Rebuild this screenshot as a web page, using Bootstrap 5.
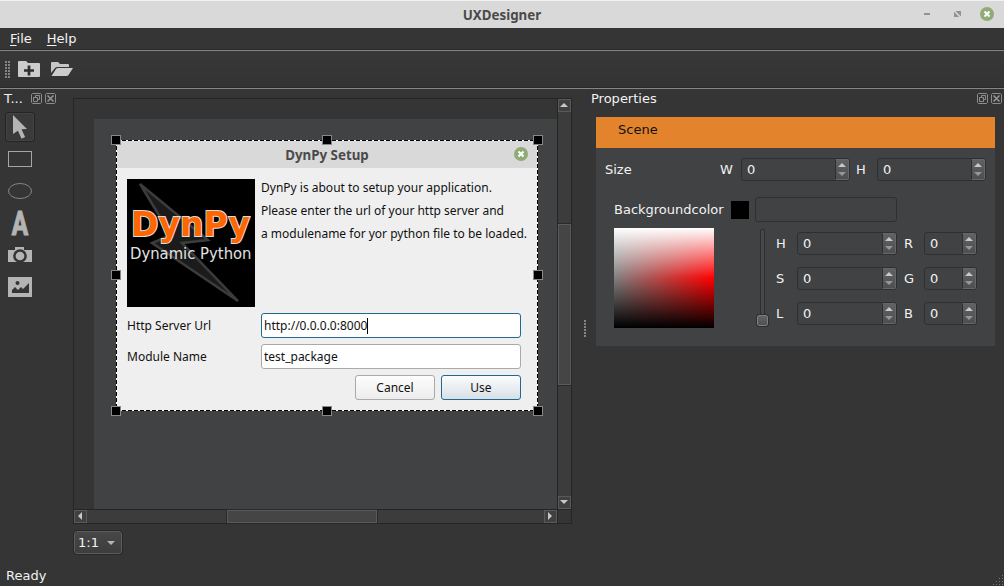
<!DOCTYPE html>
<html lang="en">
<head>
<meta charset="utf-8">
<title>UXDesigner</title>
<link rel="stylesheet" href="https://cdn.jsdelivr.net/npm/bootstrap@5.3.0/dist/css/bootstrap.min.css">
<style>
body{width:1004px;height:586px;overflow:hidden;background:#353535;color:#f2f2f2;font:13px/16px "DejaVu Sans",sans-serif}
svg{display:block;flex:none}
.winbar{height:28px;background:#d9d9d9;border-top:1px solid #f2f2f2;font:bold 13.33px/28px "Noto Sans",sans-serif;color:#4a4a4a}
.winbtns{right:9px;top:0}
.menus{height:23px;padding-left:10px;gap:15px;border-bottom:1px solid #858585;box-shadow:inset 0 -1px #2a2a2a;line-height:21px}
.menus u{text-underline-offset:2px}
.tools{height:38px;border-bottom:1px solid #858585;box-shadow:inset 0 -1px #2a2a2a;padding-left:5px;background:linear-gradient(#383838,#333)}
.tools svg{margin-bottom:1px}
.grip{width:5px;background:repeating-linear-gradient(#0000 0 2px,#353535 2px 3px),repeating-linear-gradient(90deg,#858585 0 2px,#353535 2px 3px)}
.leftdock{width:73px;padding-left:4px}
.dockhead{height:19px;line-height:19px}
.tool{width:30px;height:30px;border:1px solid transparent;border-radius:3px;display:flex;align-items:center;justify-content:center;margin-left:1px;margin-bottom:2px}
.tool.on{border-color:#252525;background:#3a3a3a;box-shadow:inset 0 0 0 1px #424242}
.glyph{overflow:visible;font:bold 33px Roboto,sans-serif}
.view{width:499px;height:426px;margin-top:9px;border:1px solid #252525;display:grid;grid-template:410px 14px/483px 14px}
.viewport{position:relative;overflow:hidden}
.scene{position:absolute;left:20px;top:20px;right:0;bottom:0;background:#414244}
.vbar{border-left:1px solid #252525;background:#3c3c3c}
.hbar{border-top:1px solid #252525;background:#3c3c3c}
.sbtn{width:13px;height:13px;border:1px solid #5a5a5a;background:#404040;display:flex;align-items:center;justify-content:center;flex:none;padding:0 1px 1px 0}
.thumb{border:1px solid #5a5a5a;background:#454545;outline:1px solid #292929}
.dlg{position:absolute;left:42px;top:41px;width:422px;height:271px;padding:1px;color:#111;font:12px/23px "Noto Sans",sans-serif;
background:repeating-linear-gradient(90deg,#000 0 4px,#fff 4px 6px) 0 0/100% 1px no-repeat,repeating-linear-gradient(90deg,#000 0 4px,#fff 4px 6px) 0 100%/100% 1px no-repeat,repeating-linear-gradient(#000 0 4px,#fff 4px 6px) 0 0/1px 100% no-repeat,repeating-linear-gradient(#000 0 4px,#fff 4px 6px) 100% 0/1px 100% no-repeat,#efefef}
.dlghead{height:27px;background:#d9d9d9;font:bold 13.33px/28px "Noto Sans",sans-serif;color:#4a4a4a;position:relative}
.dlgx{position:absolute;right:9px;top:6px}
.hnd{position:absolute;width:10px;height:10px;background:#000;border:1px solid #888}
.dlgbody{padding:11px 16px 0 10px}
.formgrid{display:grid;grid-template-columns:134px 260px;row-gap:6px;margin-top:6px;line-height:25px}
.inp{height:25px;border:1px solid #aaa;border-radius:3px;background:#fff;padding-left:2px;line-height:23px}
.inp.act{border-color:#21698f}
.caret{display:inline-block;width:1px;height:16px;background:#000;vertical-align:-4px}
.dbtn{width:80px;height:25px;border:1px solid #aaa;border-radius:3px;background:linear-gradient(#fdfdfd,#ececec);text-align:center;line-height:23px}
.dbtn.act{border-color:#21698f;background:linear-gradient(#fbfcfd,#d8e0e6)}
.zoomsel{width:48px;height:23px;margin:7px 0 0 1px;border:1px solid #5c5c5c;outline:1px solid #292929;border-radius:3px;background:linear-gradient(#474747,#3d3d3d);padding:0 6px 0 3px}
.props{width:413px}
.panel{margin-left:5px;width:399px;height:229px;background:#414244}
.cat{height:31px;background:#e3842c;color:#111;padding-left:22px;line-height:25px}
.fld{height:23px;border:1px solid #2e2f30;border-radius:3px;display:flex;padding-left:5px;line-height:21px}
.fld .val{flex:1}
.spin{width:14px;background:linear-gradient(#606163,#4e4f51);border:1px solid #66676a;border-left:1px solid #2e2f30;border-radius:0 2px 2px 0;display:flex;flex-direction:column;justify-content:space-between;align-items:center;padding:3px 0}
.swatch{width:18px;height:18px;background:#000}
.field2d{width:100px;height:100px;background:linear-gradient(#fff,#fff0 50%,#0000 50%,#000),linear-gradient(90deg,#808080,#f00)}
.slider{width:13px;height:99px;margin:1px 0 0 42px}
.groove{width:5px;height:86px;border:1px solid #2c2d2e;border-bottom:0;border-radius:2px 2px 0 0;background:#48494b}
.knob{width:11px;height:11px;border:1px solid #808080;border-radius:2px;background:linear-gradient(#636363,#515151);outline:1px solid #2c2d2e}
.chan{display:grid;grid-template-columns:21px 100px 27px 53px;row-gap:12px;align-content:start;margin:4px 0 0 7px;line-height:23px}
.chan span.second{padding-left:7px}
.status{height:21px;padding-left:6px;line-height:21px}
</style>
</head>
<body class="d-flex flex-column">
<svg width="0" height="0" class="position-absolute"><defs>
<g id="close"><circle cx="7" cy="7" r="7" fill="#90ab76"/><path d="M4.500 4.500l5 5m0-5l-5 5" stroke="#fff" stroke-width="2"/></g>
<g id="float" fill="none" stroke="#969696"><path d="M1.500.5h8l1 1v8l-1 1h-8l-1-1v-8zM4.500 4V2.500h4v4H7M2.500 4.500h4v4h-4z" stroke-width=".9"/></g>
<g id="shut" fill="none" stroke="#969696"><path d="M1.500.5h8l1 1v8l-1 1h-8l-1-1v-8z" stroke-width=".9"/><path d="M2.500 2.500l6 6m0-6l-6 6" stroke-width="1.500"/></g>
<path id="up" d="M0 4L4 0l4 4z"/><path id="down" d="M0 0h8L4 4z"/>
</defs></svg>

<header class="winbar text-center position-relative">UXDesigner
  <svg class="winbtns position-absolute" width="74" height="27"><path d="M3 13h6" stroke="#929292" stroke-width="2"/><path d="M34.500 10H40v5.500zM33 10.800V16h5.200z" fill="#929292"/></svg>
  <svg class="position-absolute" style="right:10px;top:6px" width="14" height="14"><use href="#close"/></svg>
</header>
<nav class="menus d-flex"><span><u>F</u>ile</span><span><u>H</u>elp</span></nav>
<div class="tools d-flex align-items-center">
  <div class="grip" style="height:17px"></div>
  <svg class="ms-2" width="23" height="18" viewBox="0 0 23 18"><path d="M0 2q0-1 1-1h7l2 2h11q1 0 1 1v12q0 1-1 1H1q-1 0-1-1z" fill="#ccc"/><path d="M11 5.500v10M6 10.500h10" stroke="#2e2e2e" stroke-width="2.700"/></svg>
  <svg style="margin-left:9px" width="24" height="18" viewBox="0 0 24 18"><path d="M1 13V3q0-1 1-1h6l2 2h8q1 0 1 1v2H7q-1 0-2 1z" fill="#c6c6c6"/><path d="M1.500 16L6 9q.6-1 2-1h15L18.500 15q-.6 1-2 1z" fill="#ccc"/></svg>
</div>

<main class="d-flex flex-grow-1">
  <aside class="leftdock">
    <div class="dockhead d-flex"><span style="width:27px">T...</span><svg class="mt-1" width="11" height="11"><use href="#float"/></svg><svg class="mt-1" style="margin-left:3px" width="11" height="11"><use href="#shut"/></svg></div>
    <div style="padding-top:4px">
      <div class="tool on"><svg width="20" height="26" viewBox="0 0 20 26"><path d="M3 1l14 14-5.500.3 3.600 7.700-3.500 1.700-3.700-7.900L3 20z" fill="#b4b4b4"/></svg></div>
      <div class="tool"><svg width="24" height="16"><rect x=".5" y=".5" width="23" height="15" fill="none" stroke="#a6a6a6"/></svg></div>
      <div class="tool"><svg width="24" height="16"><ellipse cx="12" cy="8" rx="11.500" ry="7.500" fill="none" stroke="#858585"/></svg></div>
      <div class="tool"><svg class="glyph" width="18" height="24" viewBox="0 0 18 24"><text x=".8" y="23.500" textLength="16.400" lengthAdjust="spacingAndGlyphs" fill="#b4b4b4" stroke="#b4b4b4" stroke-width="1.200">A</text></svg></div>
      <div class="tool"><svg width="24" height="16"><path d="M0 3h7V0h9v3h8v12H0z" fill="#b4b4b4"/><circle cx="12" cy="9" r="5.600" fill="#b4b4b4" stroke="#353535" stroke-width="2.500"/></svg></div>
      <div class="tool"><svg width="24" height="20"><path d="M0 0h24v20H0z" fill="#b4b4b4"/><circle cx="9.500" cy="6" r="2" fill="#353535"/><path d="M4 16v-3l3-3 3 3 3-3 2 2 6-6v10z" fill="#353535"/></svg></div>
    </div>
  </aside>

  <section>
    <div class="view">
      <div class="viewport"><div class="scene"></div>
        <div class="dlg">
          <div class="dlghead text-center">DynPy Setup<svg class="dlgx" width="14" height="14"><use href="#close"/></svg></div>
          <div class="dlgbody">
            <div class="d-flex">
              <svg width="128" height="128"><path d="M0 0h128v128H0z"/><path d="M13 5L81 61 55 64l56 58L25 64l19-8z" fill="#1b1b1b" stroke="#3c3c3c" stroke-width="2.500"/><text x="4" y="57" font-family="DejaVu Sans" font-weight="bold" font-size="33.500" textLength="119" lengthAdjust="spacingAndGlyphs" fill="#ff6600" stroke="#ddd" stroke-width="2" paint-order="stroke">DynPy</text><text x="3" y="80" font-family="DejaVu Sans" font-size="15" textLength="121.500" lengthAdjust="spacingAndGlyphs" fill="#e2e2e2">Dynamic Python</text></svg>
              <div class="text-nowrap" style="margin:-3px 0 0 6px">DynPy is about to setup your application.<br>Please enter the url of your http server and<br>a modulename for yor python file to be loaded.</div>
            </div>
            <div class="formgrid"><span>Http Server Url</span><div class="inp act">http://0.0.0.0:8000<i class="caret"></i></div><span>Module Name</span><div class="inp">test_package</div></div>
            <div class="d-flex justify-content-end" style="gap:6px;margin-top:6px"><div class="dbtn">Cancel</div><div class="dbtn act">Use</div></div>
          </div>
          <i class="hnd" style="left:-5px;top:-5px"></i><i class="hnd" style="left:206px;top:-5px"></i><i class="hnd" style="left:417px;top:-5px"></i>
          <i class="hnd" style="left:-5px;top:130px"></i><i class="hnd" style="left:417px;top:130px"></i>
          <i class="hnd" style="left:-5px;top:266px"></i><i class="hnd" style="left:206px;top:266px"></i><i class="hnd" style="left:417px;top:266px"></i>
        </div>
      </div>
      <div class="vbar d-flex flex-column"><div class="sbtn"><svg width="8" height="4" fill="#c8c8c8"><use href="#up"/></svg></div><div class="thumb" style="height:161px;margin:112px 0 auto"></div><div class="sbtn"><svg width="8" height="4" fill="#c8c8c8"><use href="#down"/></svg></div></div>
      <div class="hbar d-flex"><div class="sbtn"><svg width="4" height="8" fill="#c8c8c8"><path d="M4 0v8L0 4z"/></svg></div><div class="thumb" style="width:150px;margin:0 auto 0 140px"></div><div class="sbtn"><svg width="4" height="8" fill="#c8c8c8"><path d="M0 0v8l4-4z"/></svg></div></div>
      <div style="border:solid #252525;border-width:1px 0 0 1px"></div>
    </div>
    <div class="zoomsel d-flex align-items-center justify-content-between"><span>1:1</span><svg width="8" height="4" fill="#b5b5b5"><use href="#down"/></svg></div>
  </section>

  <div style="width:19px;padding:231px 0 0 12px"><div class="grip" style="width:2px;height:17px"></div></div>

  <aside class="props">
    <div class="d-flex" style="height:28px;line-height:19px"><span>Properties</span><svg class="ms-auto mt-1" width="11" height="11"><use href="#float"/></svg><svg class="mt-1" style="margin:0 2px 0 3px" width="11" height="11"><use href="#shut"/></svg></div>
    <div class="panel">
      <div class="cat">Scene</div>
      <div class="d-flex" style="padding:10px 0 0 9px;line-height:23px">
        <span style="width:115px">Size</span><span style="width:21px">W</span>
        <div class="fld" style="width:109px"><span class="val">0</span><span class="spin"><svg width="8" height="4" fill="#c8c8c8"><use href="#up"/></svg><svg width="8" height="4" fill="#969696"><use href="#down"/></svg></span></div>
        <span style="width:27px;padding-left:6px">H</span>
        <div class="fld" style="width:109px"><span class="val">0</span><span class="spin"><svg width="8" height="4" fill="#c8c8c8"><use href="#up"/></svg><svg width="8" height="4" fill="#969696"><use href="#down"/></svg></span></div>
      </div>
      <div class="d-flex align-items-center" style="padding:16px 0 0 18px"><span style="width:117px">Backgroundcolor</span><div class="swatch"></div><div class="fld" style="width:142px;height:25px;margin-left:6px"></div></div>
      <div class="d-flex" style="padding:6px 0 0 18px">
        <div class="field2d"></div>
        <div class="slider d-flex flex-column align-items-center"><div class="groove"></div><div class="knob"></div></div>
        <div class="chan">
          <span>H</span><div class="fld"><span class="val">0</span><span class="spin"><svg width="8" height="4" fill="#c8c8c8"><use href="#up"/></svg><svg width="8" height="4" fill="#969696"><use href="#down"/></svg></span></div><span class="second">R</span><div class="fld"><span class="val">0</span><span class="spin"><svg width="8" height="4" fill="#c8c8c8"><use href="#up"/></svg><svg width="8" height="4" fill="#969696"><use href="#down"/></svg></span></div>
          <span>S</span><div class="fld"><span class="val">0</span><span class="spin"><svg width="8" height="4" fill="#c8c8c8"><use href="#up"/></svg><svg width="8" height="4" fill="#969696"><use href="#down"/></svg></span></div><span class="second">G</span><div class="fld"><span class="val">0</span><span class="spin"><svg width="8" height="4" fill="#c8c8c8"><use href="#up"/></svg><svg width="8" height="4" fill="#969696"><use href="#down"/></svg></span></div>
          <span>L</span><div class="fld"><span class="val">0</span><span class="spin"><svg width="8" height="4" fill="#c8c8c8"><use href="#up"/></svg><svg width="8" height="4" fill="#969696"><use href="#down"/></svg></span></div><span class="second">B</span><div class="fld"><span class="val">0</span><span class="spin"><svg width="8" height="4" fill="#c8c8c8"><use href="#up"/></svg><svg width="8" height="4" fill="#969696"><use href="#down"/></svg></span></div>
        </div>
      </div>
    </div>
  </aside>
</main>
<footer class="status d-flex justify-content-between"><span>Ready</span><svg width="12" height="12" class="align-self-end" stroke="#777" stroke-dasharray="1 2"><path d="M1 10.500h11M4 7.500h8M7 4.500h5M10 1.500h2"/></svg></footer>
<script src="https://cdn.jsdelivr.net/npm/bootstrap@5.3.0/dist/js/bootstrap.bundle.min.js"></script>
</body>
</html>
